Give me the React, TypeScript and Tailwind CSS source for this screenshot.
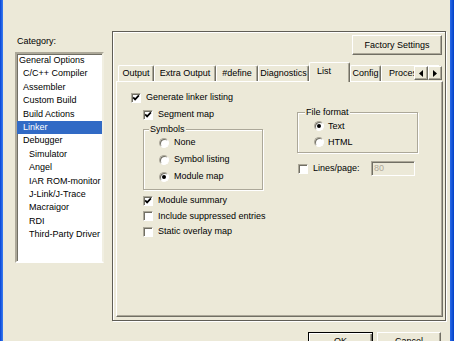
import React from "react";

const items: [string, number, boolean?][] = [
  ["General Options", 0],
  ["C/C++ Compiler", 1],
  ["Assembler", 1],
  ["Custom Build", 1],
  ["Build Actions", 1],
  ["Linker", 1, true],
  ["Debugger", 1],
  ["Simulator", 2],
  ["Angel", 2],
  ["IAR ROM-monitor", 2],
  ["J-Link/J-Trace", 2],
  ["Macraigor", 2],
  ["RDI", 2],
  ["Third-Party Driver", 2],
];
const pads = ["pl-[2px]", "pl-[6px]", "pl-[12px]"];

function Check({ checked }: { checked?: boolean }) {
  return (
    <span className="relative inline-block w-[10px] h-[10px] shrink-0 bg-white border border-t-[#aca899] border-l-[#aca899] border-b-white border-r-white shadow-[inset_1px_1px_0_#716f64]">
      {checked && (
        <svg className="absolute left-0 top-0" width="8" height="8" viewBox="0 0 8 8">
          <path d="M1.2 3.4 L3.1 5.4 L6.9 1.4" stroke="#000" strokeWidth="1.7" fill="none" />
        </svg>
      )}
    </span>
  );
}

function Radio({ on }: { on?: boolean }) {
  return (
    <span className="relative inline-block w-[10px] h-[10px] shrink-0 rounded-full bg-white border border-t-[#aca899] border-l-[#aca899] border-b-white border-r-white shadow-[inset_1px_1px_0_#716f64]">
      {on && <span className="absolute left-[2px] top-[2px] w-[4px] h-[4px] rounded-full bg-black" />}
    </span>
  );
}

function Tab({ label, w }: { label: string; w: string }) {
  return (
    <div
      className={`${w} h-[16px] shrink-0 border-t border-l border-t-white border-l-white border-r border-r-[#716f64] shadow-[inset_-1px_0_0_#aca899] rounded-t-[2px] flex items-center justify-center whitespace-nowrap`}
    >
      {label}
    </div>
  );
}

export default function App() {
  return (
    <div className="w-[454px] h-[341px] overflow-hidden flex bg-[#ece9d8] text-black text-[9px] leading-[11px] font-['Liberation_Sans',Arial,sans-serif]">
      <div className="w-[3px] shrink-0 bg-linear-to-r from-[#0842d4] to-[#3b7ef2]" />
      <div className="flex-1 flex flex-col">
        <div className="h-px bg-[#3a6fe0]" />
        <div className="flex pt-[31px] pl-[12px]">
          {/* Category column */}
          <div className="w-[89px] shrink-0 flex flex-col">
            <div className="mt-[4px] ml-[2px] h-[12px] leading-[12px]">Category:</div>
            <div className="mt-[5px] h-[211px] bg-white border-2 border-t-[#aca899] border-l-[#aca899] border-b-white border-r-[#f1efe2] shadow-[inset_1px_1px_0_#716f64] overflow-hidden">
              {items.map(([t, lvl, sel]) => (
                <div
                  key={t}
                  className={`h-[13.4px] leading-[13.4px] whitespace-nowrap ${pads[lvl]} ${sel ? "bg-[#316ac5] text-white" : ""}`}
                >
                  {t}
                </div>
              ))}
            </div>
          </div>

          {/* Outer frame */}
          <div className="ml-[8px] w-[334px] h-[290px] shrink-0 flex flex-col border border-[#5f5d55] shadow-[inset_1px_1px_0_#fff,1px_1px_0_#fff]">
            <div className="flex justify-end pt-[3px] pr-[3px]">
              <div className="w-[90px] h-[20px] flex items-center justify-center border border-t-white border-l-white border-r-[#716f64] border-b-[#716f64] shadow-[inset_-1px_-1px_0_#aca899]">
                Factory Settings
              </div>
            </div>

            <div className="flex-1 flex flex-col mt-[7px] ml-[3px] mr-[2px] mb-[3px]">
              {/* tab strip */}
              <div className="relative z-10 h-[19px] flex items-end pl-[2px]">
                <Tab label="Output" w="w-[36px]" />
                <Tab label="Extra Output" w="w-[62px]" />
                <Tab label="#define" w="w-[42px]" />
                <Tab label="Diagnostics" w="w-[51px]" />
                <div className="w-[41px] h-[20px] -mb-px shrink-0 bg-[#ece9d8] border-t border-l border-t-white border-l-white border-r border-r-[#716f64] shadow-[inset_-1px_0_0_#aca899] rounded-t-[2px] pt-[3px] pl-[7px]">
                  List
                </div>
                <Tab label="Config" w="w-[31px]" />
                <div className="w-[58px] h-[16px] shrink-0 overflow-hidden border-t border-l border-t-white border-l-white flex items-center pl-[7px] whitespace-nowrap">
                  Processor
                </div>
                <div className="absolute right-[1px] top-[4px] flex">
                  <div className="w-[14px] h-[14px] bg-[#ece9d8] flex items-center justify-center border border-t-white border-l-white border-r-[#716f64] border-b-[#716f64] shadow-[inset_-1px_-1px_0_#aca899]">
                    <svg width="4" height="7" viewBox="0 0 4 7">
                      <path d="M4 0 L0 3.5 L4 7 Z" fill="#000" />
                    </svg>
                  </div>
                  <div className="w-[14px] h-[14px] bg-[#ece9d8] flex items-center justify-center border border-t-white border-l-white border-r-[#716f64] border-b-[#716f64] shadow-[inset_-1px_-1px_0_#aca899]">
                    <svg width="4" height="7" viewBox="0 0 4 7">
                      <path d="M0 0 L4 3.5 L0 7 Z" fill="#000" />
                    </svg>
                  </div>
                </div>
              </div>

              {/* tab panel */}
              <div className="flex-1 flex pl-[14px] border-t border-l border-t-white border-l-white border-r border-b border-r-[#716f64] border-b-[#716f64] shadow-[inset_-1px_-1px_0_#aca899]">
                {/* left column */}
                <div className="w-[166px] shrink-0 flex flex-col pt-[7px]">
                  <div className="h-[17px] flex items-center gap-[5px]">
                    <Check checked />
                    <span>Generate linker listing</span>
                  </div>
                  <div className="h-[17px] flex items-center gap-[5px] pl-[12px]">
                    <Check checked />
                    <span>Segment map</span>
                  </div>
                  <div className="relative ml-[12px] mt-[6px] w-[120px] h-[61px] pt-[4px] pl-[15px] border border-[#aca899] shadow-[inset_1px_1px_0_#fff,1px_1px_0_#fff]">
                    <span className="absolute -top-[6px] left-[5px] px-[1px] bg-[#ece9d8]">Symbols</span>
                    <div className="h-[17px] flex items-center gap-[5px]">
                      <Radio />
                      <span>None</span>
                    </div>
                    <div className="h-[17px] flex items-center gap-[5px]">
                      <Radio />
                      <span>Symbol listing</span>
                    </div>
                    <div className="h-[17px] flex items-center gap-[5px]">
                      <Radio on />
                      <span>Module map</span>
                    </div>
                  </div>
                  <div className="mt-[3px] pl-[12px] flex flex-col">
                    <div className="h-[15.5px] flex items-center gap-[5px]">
                      <Check checked />
                      <span>Module summary</span>
                    </div>
                    <div className="h-[15.5px] flex items-center gap-[5px]">
                      <Check />
                      <span>Include suppressed entries</span>
                    </div>
                    <div className="h-[15.5px] flex items-center gap-[5px]">
                      <Check />
                      <span>Static overlay map</span>
                    </div>
                  </div>
                </div>

                {/* right column */}
                <div className="flex flex-col pt-[30px]">
                  <div className="relative w-[121px] h-[41px] pt-[5px] pl-[16px] border border-[#aca899] shadow-[inset_1px_1px_0_#fff,1px_1px_0_#fff]">
                    <span className="absolute -top-[6px] left-[7px] px-[1px] bg-[#ece9d8]">File format</span>
                    <div className="h-[16px] flex items-center gap-[4px]">
                      <Radio on />
                      <span>Text</span>
                    </div>
                    <div className="h-[16px] flex items-center gap-[4px]">
                      <Radio />
                      <span>HTML</span>
                    </div>
                  </div>
                  <div className="mt-[8px] w-[118px] h-[15px] flex items-center pl-[1px]">
                    <Check />
                    <span className="ml-[5px]">Lines/page:</span>
                    <div className="ml-auto w-[44px] h-[15px] pl-[2px] leading-[13px] text-[#aca899] border border-t-[#aca899] border-l-[#aca899] border-b-white border-r-white shadow-[inset_1px_1px_0_#716f64]">
                      80
                    </div>
                  </div>
                </div>
              </div>
            </div>
          </div>
        </div>

        {/* bottom buttons */}
        <div className="flex justify-end gap-[4px] pr-[9px] mt-[11px]">
          <div className="w-[65px] h-[18px] shrink-0 flex items-center justify-center border border-black shadow-[inset_1px_1px_0_#fff,inset_-1px_-1px_0_#716f64,inset_-2px_-2px_0_#aca899]">
            OK
          </div>
          <div className="w-[64px] h-[18px] shrink-0 flex items-center justify-center border border-t-white border-l-white border-r-[#716f64] border-b-[#716f64] shadow-[inset_-1px_-1px_0_#aca899]">
            Cancel
          </div>
        </div>
      </div>
      <div className="w-[4px] shrink-0 bg-linear-to-r from-[#2a6ae8] to-[#0040c8]" />
    </div>
  );
}
